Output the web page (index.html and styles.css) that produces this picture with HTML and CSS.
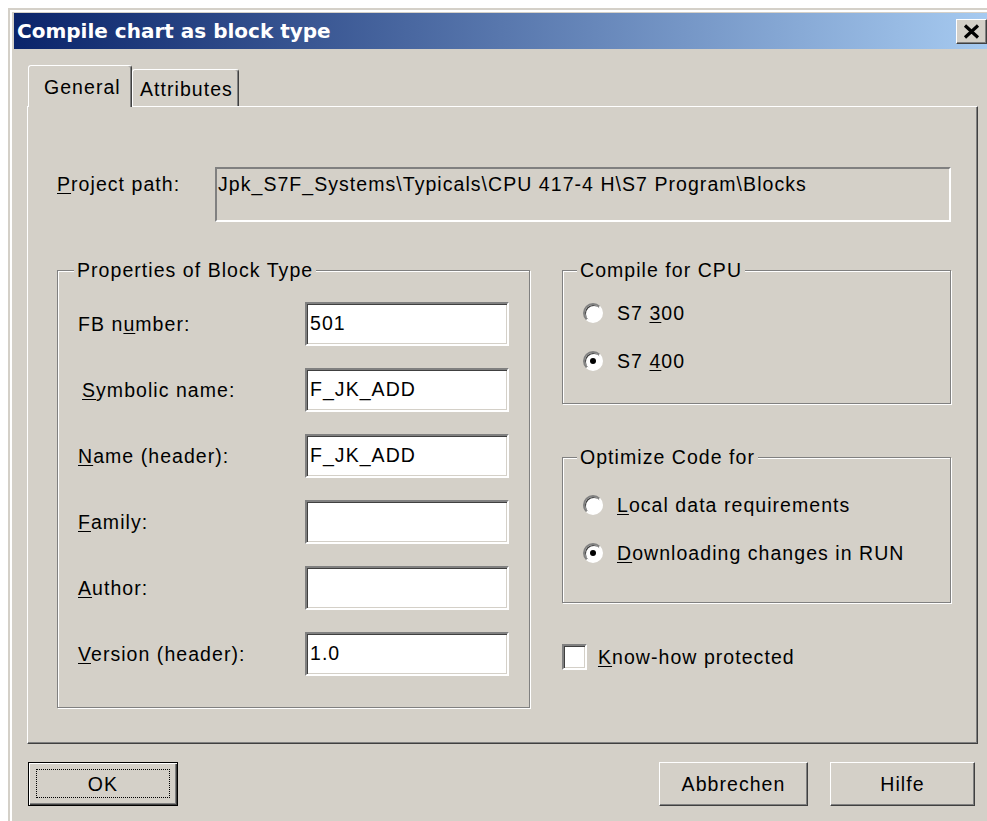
FILE: index.html
```html
<!DOCTYPE html>
<html lang="en">
<head>
<meta charset="utf-8">
<title>Compile chart as block type</title>
<link rel="stylesheet" href="styles.css">
</head>
<body>
<div class="window">
  <div class="titlebar">
    <span class="title">Compile chart as block type</span>
    <span class="close" aria-label="Close">
      <svg width="17" height="15" viewBox="0 0 17 15"><path d="M2 1.5 L15 13.5 M15 1.5 L2 13.5" stroke="#000" stroke-width="3.2"/></svg>
    </span>
  </div>
  <div class="client">
    <div class="tabs">
      <div class="tab active">General</div>
      <div class="tab">Attributes</div>
    </div>
    <div class="panel">
      <div class="path-row">
        <span class="path-label"><u>P</u>roject path:</span>
        <div class="path-box">Jpk_S7F_Systems\Typicals\CPU 417-4 H\S7 Program\Blocks</div>
      </div>
      <div class="groups">
        <fieldset class="group props">
          <legend>Properties of Block Type</legend>
          <div class="field-grid">
            <span class="field-label">FB n<u>u</u>mber:</span>
            <div class="edit">501</div>
            <span class="field-label indent"><u>S</u>ymbolic name:</span>
            <div class="edit">F_JK_ADD</div>
            <span class="field-label"><u>N</u>ame (header):</span>
            <div class="edit">F_JK_ADD</div>
            <span class="field-label"><u>F</u>amily:</span>
            <div class="edit"></div>
            <span class="field-label"><u>A</u>uthor:</span>
            <div class="edit"></div>
            <span class="field-label"><u>V</u>ersion (header):</span>
            <div class="edit">1.0</div>
          </div>
        </fieldset>
        <div class="right-col">
          <fieldset class="group cpu">
            <legend>Compile for CPU</legend>
            <div class="opts">
              <div class="opt"><span class="radio"></span><span>S7 <u>3</u>00</span></div>
              <div class="opt"><span class="radio on"></span><span>S7 <u>4</u>00</span></div>
            </div>
          </fieldset>
          <fieldset class="group optimize">
            <legend>Optimize Code for</legend>
            <div class="opts">
              <div class="opt"><span class="radio"></span><span><u>L</u>ocal data requirements</span></div>
              <div class="opt"><span class="radio on"></span><span><u>D</u>ownloading changes in RUN</span></div>
            </div>
          </fieldset>
          <div class="check-row">
            <span class="checkbox"></span><span><u>K</u>now-how protected</span>
          </div>
        </div>
      </div>
    </div>
    <div class="buttons">
      <div class="btn default ok"><span class="focus">OK</span></div>
      <div class="btn cancel">Abbrechen</div>
      <div class="btn help">Hilfe</div>
    </div>
  </div>
</div>
</body>
</html>
```
FILE: styles.css
```css
body {
  margin: 0;
  background: #fff;
  overflow: hidden;
  font-family: "Liberation Sans", Arial, sans-serif;
  font-size: 19.5px;
  letter-spacing: 1.05px;
  line-height: 22px;
  color: #000;
}

u {
  text-decoration-thickness: 1px;
  text-underline-offset: 2px;
}

/* dialog frame */
.window {
  box-sizing: border-box;
  margin: 8px 0 0 8px;
  width: 984px;
  height: 830px;
  background: #d4d0c8;
  border-top: 2px solid #d4d0c8;
  border-left: 2px solid #d4d0c8;
  box-shadow: inset 2px 2px #fff;
  padding: 3px 4px 0 4px;
}

.titlebar {
  height: 36px;
  display: flex;
  align-items: center;
  justify-content: space-between;
  padding: 0 1px 0 3px;
  background: linear-gradient(90deg, #0a246a 0%, #a6caf0 100%);
}

.title {
  color: #fff;
  font-family: "DejaVu Sans", Verdana, sans-serif;
  font-weight: bold;
  font-size: 20px;
  letter-spacing: 0;
}

.close {
  box-sizing: border-box;
  width: 31px;
  height: 25px;
  display: flex;
  align-items: center;
  justify-content: center;
  background: #d4d0c8;
  border: 1px solid;
  border-color: #fff #404040 #404040 #fff;
  box-shadow: inset -1px -1px #808080;
}

.client {
  padding: 0 10px 0 13px;
}

/* tab strip */
.tabs {
  display: flex;
  align-items: flex-end;
  margin-top: 16px;
  padding-left: 1px;
}

.tab {
  box-sizing: border-box;
  height: 37px;
  width: 107px;
  padding: 2px 0 0 7px;
  display: flex;
  align-items: center;
  border: 1px solid;
  border-bottom: none;
  border-color: #fff #404040 transparent #fff;
  border-radius: 3px 3px 0 0;
  box-shadow: inset -1px 0 #808080;
}

.tab.active {
  height: 42px;
  width: 104px;
  padding: 0 0 0 15px;
  margin-bottom: -1px;
  background: #d4d0c8;
  position: relative;
  z-index: 1;
}

.panel {
  border: 1px solid;
  border-color: #fff #404040 #404040 #fff;
  box-shadow: inset -1px -1px #808080;
  padding: 60px 26px 35px 29px;
}

/* project path */
.path-row {
  display: flex;
  align-items: flex-start;
}

.path-label {
  width: 158px;
  flex: none;
  padding-top: 6px;
}

.path-box {
  flex: 1;
  box-sizing: border-box;
  height: 55px;
  border: 2px solid;
  border-color: #808080 #fff #fff #808080;
  padding: 4px 1px;
  white-space: nowrap;
}

/* group boxes */
.groups {
  display: grid;
  grid-template-columns: 473px 389px;
  column-gap: 32px;
  align-items: start;
  margin-top: 37px;
}

.group {
  margin: 0;
  min-width: 0;
  border: 1px solid #808080;
  box-shadow: inset 1px 1px #fff, 1px 1px #fff;
  padding: 21px 20px 31px 20px;
}

.group legend {
  padding: 0 3px;
  margin-left: -4px;
  line-height: 22px;
  background: #d4d0c8;
}

.cpu legend,
.optimize legend {
  margin-left: -6px;
}

.field-grid {
  display: grid;
  grid-template-columns: 227px 204px;
  grid-auto-rows: 44px;
  row-gap: 22px;
  align-items: center;
}

.field-label.indent {
  padding-left: 4px;
}

.edit {
  box-sizing: border-box;
  height: 44px;
  display: flex;
  align-items: center;
  padding: 0 0 3px 3px;
  background: #fff;
  border: 2px solid;
  border-color: #808080 #fff #fff #808080;
  box-shadow: inset 1px 1px #404040, inset -1px -1px #d4d0c8;
}

.right-col {
  display: flex;
  flex-direction: column;
}

.cpu {
  padding: 18px 20px 28px 20px;
}

.optimize {
  margin-top: 42px;
  padding: 23px 20px 35px 20px;
}

.opts {
  display: flex;
  flex-direction: column;
  gap: 20px;
}

.opt {
  height: 28px;
  display: flex;
  align-items: center;
  gap: 14px;
}

.radio {
  flex: none;
  box-sizing: border-box;
  width: 20px;
  height: 20px;
  border-radius: 50%;
  background: #fff;
  border: 2px solid;
  border-color: #808080 #fff #fff #808080;
  box-shadow: inset 1px 1px #404040;
  display: flex;
  align-items: center;
  justify-content: center;
}

.radio.on::after {
  content: "";
  width: 6px;
  height: 6px;
  border-radius: 50%;
  background: #000;
}

.check-row {
  margin-top: 41px;
  display: flex;
  align-items: center;
  gap: 11px;
}

.checkbox {
  flex: none;
  box-sizing: border-box;
  width: 25px;
  height: 26px;
  background: #fff;
  border: 2px solid;
  border-color: #808080 #fff #fff #808080;
  box-shadow: inset 1px 1px #404040, inset -1px -1px #d4d0c8;
}

/* push buttons */
.buttons {
  display: flex;
  margin-top: 18px;
  padding: 0 3px 0 1px;
}

.btn {
  box-sizing: border-box;
  height: 44px;
  display: flex;
  align-items: center;
  justify-content: center;
  border: 1px solid;
  border-color: #fff #404040 #404040 #fff;
  box-shadow: inset -1px -1px #808080;
}

.btn.default {
  width: 150px;
  border: 1px solid #000;
  box-shadow: inset 1px 1px #fff, inset -1px -1px #404040, inset -2px -2px #808080;
  padding: 6px 7px 7px 7px;
  align-items: stretch;
}

.focus {
  flex: 1;
  display: flex;
  align-items: center;
  justify-content: center;
  border: 1px dotted #000;
}

.cancel {
  width: 149px;
  margin-left: auto;
}

.help {
  width: 145px;
  margin-left: 22px;
}
```
